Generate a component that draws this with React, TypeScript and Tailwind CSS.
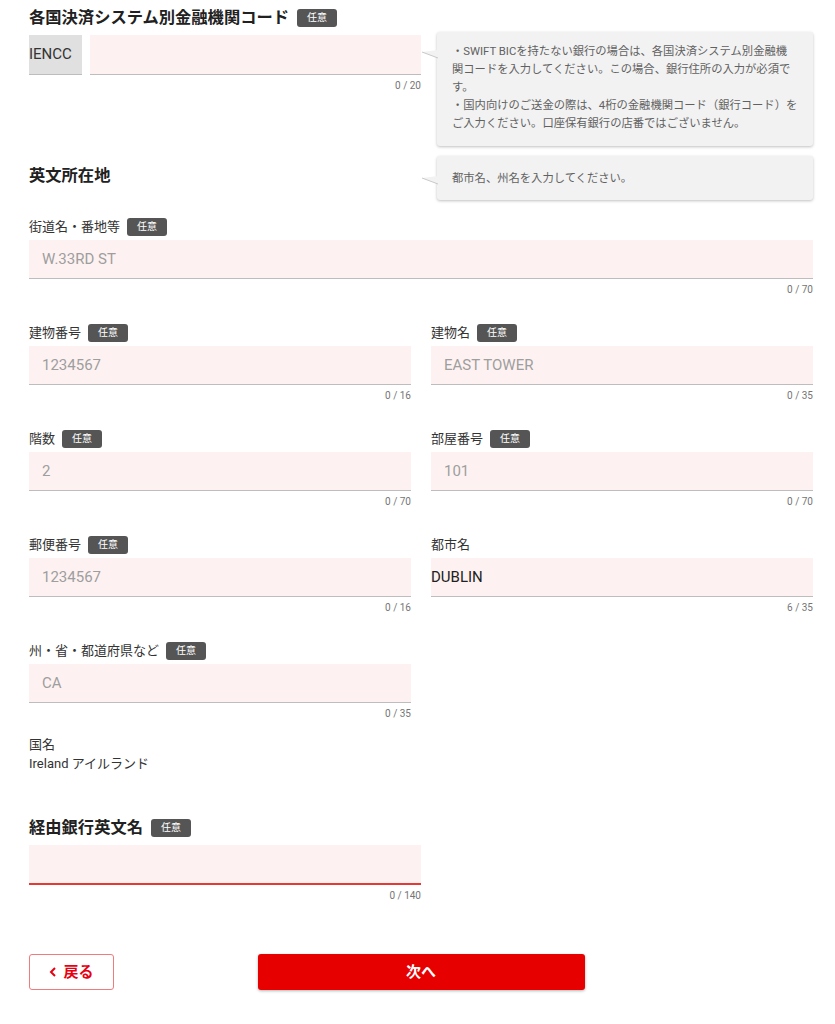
import type { ReactNode } from 'react';

const font = { fontFamily: 'Roboto, "Noto Sans CJK JP", sans-serif' };

const Badge = () => (
	<span className="inline-flex h-[18px] w-[40px] items-center justify-center rounded-[3px] bg-[#555555] text-[10px] leading-none text-white">
		任意
	</span>
);

const Counter = ({ text }: { text: string }) => (
	<div className="mt-[4px] h-[14px] text-right text-[10px] leading-[14px] text-[#757575]">
		{text}
	</div>
);

type FieldProps = {
	label: string;
	optional?: boolean;
	placeholder?: string;
	value?: string;
	count: string;
};

const Field = ({ label, optional = true, placeholder, value, count }: FieldProps) => (
	<div>
		<div className="flex h-[20px] items-center gap-[7px] pt-[1px] text-[13px] text-[#333333]">
			<span>{label}</span>
			{optional && <Badge />}
		</div>
		<input
			readOnly
			placeholder={placeholder}
			value={value ?? ''}
			className={`mt-[4px] block h-[39px] w-full border-b border-[#bdbdbd] bg-[#fdf2f1] text-[15px] text-[#212121] outline-none placeholder:text-[#9e9e9e] ${value ? 'pl-0' : 'pl-[13px]'}`}
		/>
		<Counter text={count} />
	</div>
);

const Tip = ({ children, className, arrowTop }: { children: ReactNode; className: string; arrowTop: string }) => (
	<div className={`relative rounded-[3px] bg-[#f2f2f2] px-[15px] text-[11.3px] leading-[18px] text-[#616161] shadow-[0_1px_3px_rgba(0,0,0,0.25)] ${className}`}>
		<svg className={`absolute left-[-15px] h-[10px] w-[16px] ${arrowTop}`} viewBox="0 0 16 10">
			<polygon points="16,1 0,3 16,9" fill="#f2f2f2" />
			<line x1="0" y1="3" x2="16" y2="9" stroke="#c8c8c8" strokeWidth="1" />
		</svg>
		{children}
	</div>
);

export default function App() {
	return (
		<div className="min-h-screen bg-white pl-[29px] pr-[22px] pt-[6px] pb-[34px] text-[#212121]" style={font}>
			{/* top section: bank code + tips */}
			<div className="flex">
				<div className="w-[392px] shrink-0">
					<div className="flex h-[24px] items-center gap-[8px]">
						<h2 className="text-[16.3px] font-bold leading-[24px]">各国決済システム別金融機関コード</h2>
						<Badge />
					</div>
					<div className="mt-[5px] flex h-[40px] gap-[8px]">
						<div className="flex w-[53px] items-center border-b border-[#bdbdbd] bg-[#e0e0e0] text-[15px] text-[#333333]">
							IENCC
						</div>
						<input readOnly className="block h-[40px] flex-1 border-b border-[#bdbdbd] bg-[#fdf2f1] outline-none" />
					</div>
					<Counter text="0 / 20" />
					<h2 className="mt-[71px] text-[16.3px] font-bold leading-[24px]">英文所在地</h2>
				</div>
				<div className="ml-[16px] mt-[26px] flex-1">
					<Tip className="pt-[11px] pb-[13px]" arrowTop="top-[17px]">
						<p>・SWIFT BICを持たない銀行の場合は、各国決済システム別金融機関コードを入力してください。この場合、銀行住所の入力が必須です。</p>
						<p>・国内向けのご送金の際は、4桁の金融機関コード（銀行コード）をご入力ください。口座保有銀行の店番ではございません。</p>
					</Tip>
					<Tip className="mt-[10px] pt-[14px] pb-[12px]" arrowTop="top-[19px]">
						<p>都市名、州名を入力してください。</p>
					</Tip>
				</div>
			</div>

			{/* address fields */}
			<div className="mt-[16px]">
				<Field label="街道名・番地等" placeholder="W.33RD ST" count="0 / 70" />
			</div>
			<div className="mt-[25px] grid grid-cols-2 gap-x-[20px] gap-y-[25px]">
				<Field label="建物番号" placeholder="1234567" count="0 / 16" />
				<Field label="建物名" placeholder="EAST TOWER" count="0 / 35" />
				<Field label="階数" placeholder="2" count="0 / 70" />
				<Field label="部屋番号" placeholder="101" count="0 / 70" />
				<Field label="郵便番号" placeholder="1234567" count="0 / 16" />
				<Field label="都市名" optional={false} value="DUBLIN" count="6 / 35" />
				<Field label="州・省・都道府県など" placeholder="CA" count="0 / 35" />
			</div>

			<div className="mt-[14px] text-[13px] leading-[19px] text-[#333333]">
				<div>国名</div>
				<div>Ireland アイルランド</div>
			</div>

			{/* intermediary bank */}
			<div className="mt-[43px] w-[392px]">
				<div className="flex h-[24px] items-center gap-[8px]">
					<h2 className="text-[16.3px] font-bold leading-[24px]">経由銀行英文名</h2>
					<Badge />
				</div>
				<input readOnly className="mt-[5px] block h-[40px] w-full border-b-2 border-[#e53935] bg-[#fdf2f1] outline-none" />
				<Counter text="0 / 140" />
			</div>

			{/* buttons */}
			<div className="mt-[51px] grid grid-cols-[1fr_327px_1fr]">
				<div>
					<button
						type="button"
						className="flex h-[36px] w-[85px] items-center justify-center gap-[6px] rounded-[3px] border border-[#ef7b7b] bg-white text-[15px] font-bold text-[#e60012]"
					>
						<svg width="8" height="10" viewBox="0 0 8 10" fill="none">
							<polyline points="6,1 2,5 6,9" stroke="#e60012" strokeWidth="2" />
						</svg>
						戻る
					</button>
				</div>
				<button
					type="button"
					className="h-[36px] rounded-[3px] bg-[#e60000] text-[15px] font-bold text-white shadow-[0_1px_3px_rgba(0,0,0,0.3)]"
				>
					次へ
				</button>
				<div />
			</div>
		</div>
	);
}
